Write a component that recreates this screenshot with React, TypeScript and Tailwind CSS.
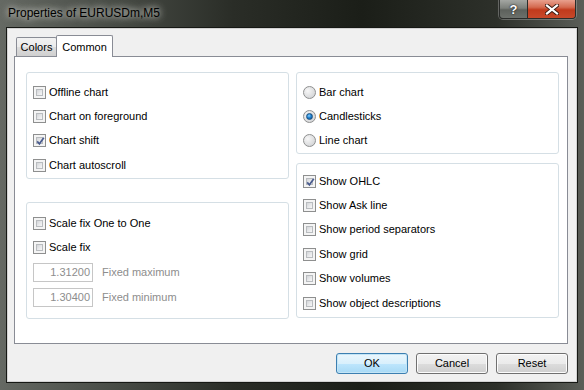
import React from "react";

function CheckBox({ checked }: { checked?: boolean }) {
  return (
    <div className="w-[13px] h-[13px] shrink-0 border border-[#8e8f8f] bg-[#f4f4f4] p-[2px] relative">
      <div className="w-full h-full border border-[#b9bcbf] bg-[linear-gradient(135deg,#d3d5d8_0%,#e6e7e9_50%,#f7f7f7_100%)]" />
      {checked && (
        <svg className="absolute left-[1px] top-[1px]" width="11" height="11" viewBox="0 0 11 11">
          <path d="M2.2 5.4 L4.4 7.8 L8.8 1.8" fill="none" stroke="#4a5c8e" strokeWidth="1.7" />
        </svg>
      )}
    </div>
  );
}

function Radio({ checked }: { checked?: boolean }) {
  return (
    <div className="w-[13px] h-[13px] shrink-0 rounded-full border border-[#8e8f8f] bg-[radial-gradient(circle_at_35%_35%,#f7f7f7_0%,#d8d9db_70%,#c8c9cb_100%)] flex items-center justify-center">
      {checked && (
        <div className="w-[7px] h-[7px] rounded-full border border-[#1c5180] bg-[radial-gradient(circle_at_40%_35%,#8ad0ff_0%,#1f82d1_45%,#0c4a86_100%)]" />
      )}
    </div>
  );
}

function CheckRow({ label, checked }: { label: string; checked?: boolean }) {
  return (
    <div className="h-[24.4px] flex items-center gap-[3px]">
      <CheckBox checked={checked} />
      <span className="text-[11px] leading-[13px] text-black">{label}</span>
    </div>
  );
}

function RadioRow({ label, checked }: { label: string; checked?: boolean }) {
  return (
    <div className="h-[24.4px] flex items-center gap-[3px]">
      <Radio checked={checked} />
      <span className="text-[11px] leading-[13px] text-black">{label}</span>
    </div>
  );
}

function FixedRow({ value, label }: { value: string; label: string }) {
  return (
    <div className="h-[25px] flex items-center">
      <div className="w-[60px] h-[19px] border border-[#c6c6c6] bg-white flex items-center justify-end pr-[2px] text-[11px] text-[#8d8d8d]">
        {value}
      </div>
      <span className="ml-[9px] text-[11px] text-[#8d8d8d]">{label}</span>
    </div>
  );
}

function Btn({ label, focused }: { label: string; focused?: boolean }) {
  return (
    <div
      className={
        focused
          ? "w-[72px] h-[21px] rounded-[3px] border border-[#3c7fb1] bg-[linear-gradient(180deg,#eaf6fd_0%,#d9f0fc_50%,#bee6fd_51%,#a7d9f5_100%)] flex items-center justify-center text-[11px] text-black shadow-[inset_0_0_0_1px_#c4e5f6]"
          : "w-[72px] h-[21px] rounded-[3px] border border-[#707070] bg-[linear-gradient(180deg,#f2f2f2_0%,#ebebeb_50%,#dddddd_51%,#cfcfcf_100%)] flex items-center justify-center text-[11px] text-black shadow-[inset_0_0_0_1px_#fcfcfc]"
      }
    >
      {label}
    </div>
  );
}

export default function App() {
  return (
    <div className="w-[584px] h-[390px] overflow-hidden flex flex-col bg-[linear-gradient(90deg,#656963_0%,#4a4e48_18%,#2a2d27_40%,#1b1e18_62%,#2d302a_85%,#5b5e58_100%)] font-['Liberation_Sans',Arial,sans-serif]">
      {/* Title bar */}
      <div className="h-[28px] flex items-start justify-between pl-[8px] pr-[8px] shrink-0">
        <div className="pt-[5px] text-[12px] leading-[16px] text-black [text-shadow:0_0_6px_rgba(235,235,230,0.9),0_0_10px_rgba(220,220,215,0.7)]">
          Properties of EURUSDm,M5
        </div>
        <div className="flex h-[19px] rounded-b-[4px] border border-t-0 border-[#2a2c2a] overflow-hidden shadow-[0_0_0_1px_rgba(200,200,200,0.35)]">
          <div className="w-[28px] h-full bg-[linear-gradient(180deg,#a3a6a2_0%,#7c807b_45%,#5d615c_55%,#6c706b_100%)] flex items-center justify-center border-r border-[#2a2c2a]">
            <span className="text-[13px] font-bold leading-none text-white [text-shadow:0_0_2px_#222,0_0_1px_#000]">?</span>
          </div>
          <div className="w-[47px] h-full bg-[linear-gradient(180deg,#e8a08e_0%,#d46a50_40%,#c13a1c_55%,#c7482a_100%)] flex items-center justify-center">
            <svg width="14" height="11" viewBox="0 0 14 11">
              <path d="M2 1.5 L12 9.5 M12 1.5 L2 9.5" stroke="#3a1a12" strokeWidth="4" strokeLinecap="square" />
              <path d="M2 1.5 L12 9.5 M12 1.5 L2 9.5" stroke="#ffffff" strokeWidth="2.2" strokeLinecap="square" />
            </svg>
          </div>
        </div>
      </div>

      {/* Client area */}
      <div className="mx-[7px] h-[354px] border border-[#d2d2d2] shadow-[0_0_0_1px_#161814] bg-[#f0f0f0] pl-[6px] pr-[8px] pt-[6px] flex flex-col">
        {/* Tabs */}
        <div className="h-[22px] flex items-end pl-[2px] relative z-10">
          <div className="w-[41px] h-[19px] mb-[1px] border border-b-0 border-[#898c95] rounded-t-[2px] bg-[linear-gradient(180deg,#f2f2f2_0%,#ebebeb_50%,#dddddd_51%,#cfcfcf_100%)] text-[11px] flex items-center justify-center pt-[1px]">
            Colors
          </div>
          <div className="w-[57px] h-[22px] -ml-[1px] border border-b-0 border-[#898c95] rounded-t-[2px] bg-white text-[11px] flex items-start justify-center pt-[3px]">
            Common
          </div>
        </div>
        {/* Panel */}
        <div className="-mt-[1px] h-[288px] border border-[#898c95] bg-white pl-[11px] pt-[15px] flex gap-[7px]">
          {/* Left column */}
          <div className="w-[263px] flex flex-col">
            <div className="h-[107px] border border-[#d5dfe5] rounded-[3px] pl-[6px] pt-[7px]">
              <CheckRow label="Offline chart" />
              <CheckRow label="Chart on foreground" />
              <CheckRow label="Chart shift" checked />
              <CheckRow label="Chart autoscroll" />
            </div>
            <div className="mt-[23px] h-[117px] border border-[#d5dfe5] rounded-[3px] pl-[6px] pt-[8px]">
              <CheckRow label="Scale fix One to One" />
              <CheckRow label="Scale fix" />
              <FixedRow value="1.31200" label="Fixed maximum" />
              <FixedRow value="1.30400" label="Fixed minimum" />
            </div>
          </div>
          {/* Right column */}
          <div className="w-[263px] flex flex-col">
            <div className="h-[82px] border border-[#d5dfe5] rounded-[3px] pl-[6px] pt-[7px]">
              <RadioRow label="Bar chart" />
              <RadioRow label="Candlesticks" checked />
              <RadioRow label="Line chart" />
            </div>
            <div className="mt-[9px] h-[155px] border border-[#d5dfe5] rounded-[3px] pl-[6px] pt-[5px]">
              <CheckRow label="Show OHLC" checked />
              <CheckRow label="Show Ask line" />
              <CheckRow label="Show period separators" />
              <CheckRow label="Show grid" />
              <CheckRow label="Show volumes" />
              <CheckRow label="Show object descriptions" />
            </div>
          </div>
        </div>
        {/* Buttons */}
        <div className="mt-[9px] flex justify-end gap-[8px]">
          <Btn label="OK" focused />
          <Btn label="Cancel" />
          <Btn label="Reset" />
        </div>
      </div>
    </div>
  );
}
